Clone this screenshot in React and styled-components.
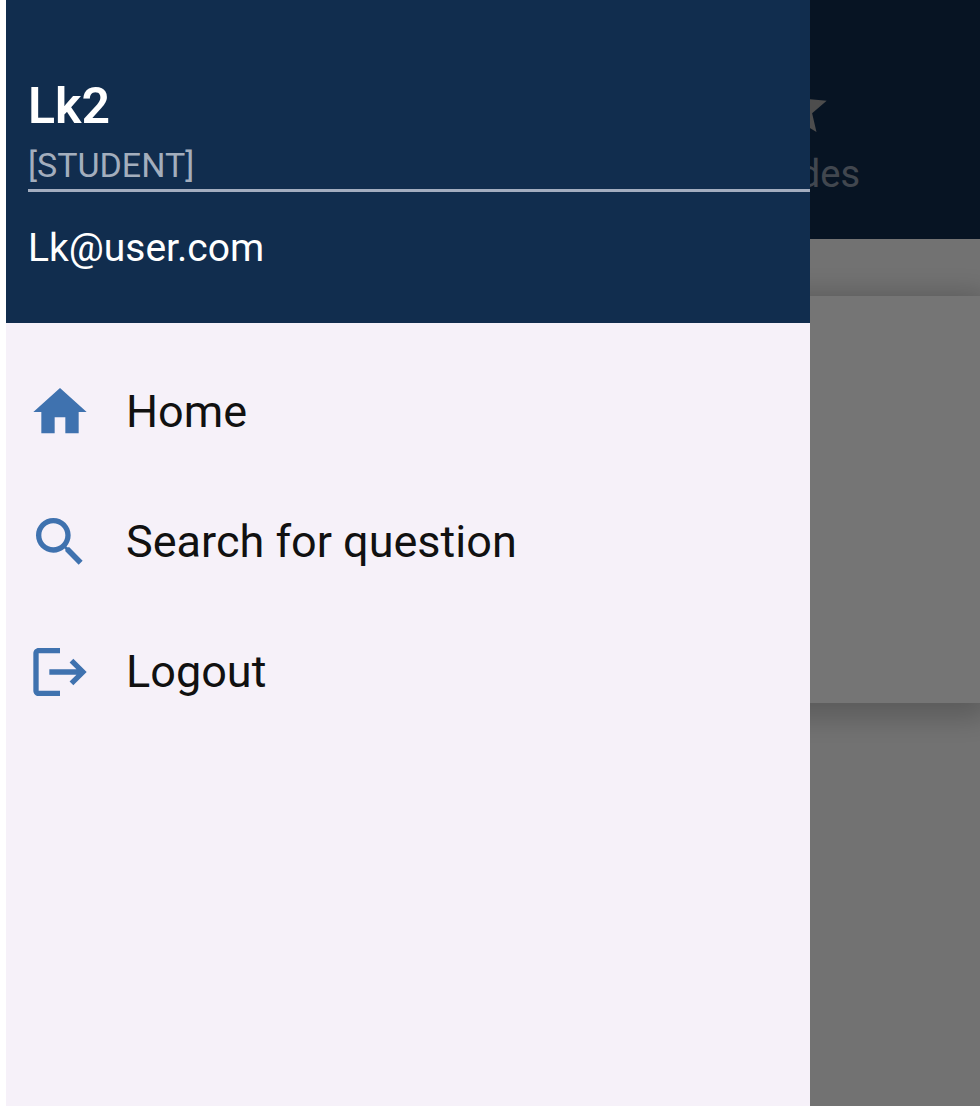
import React from "react";
import styled, { createGlobalStyle } from "styled-components";

const GlobalStyle = createGlobalStyle`
  * { box-sizing: border-box; }
  body { margin: 0; background: #ffffff; font-family: Roboto, sans-serif; }
`;

const Screen = styled.div`
  position: relative;
  min-height: 100vh;
  margin-left: 6px;
  overflow: hidden;
  background: #f9f9f9;
`;

const TopBar = styled.header`
  display: flex;
  justify-content: flex-end;
  height: 239px;
  padding: 76px 120px 0 0;
  background: #112d4e;
`;

const Tab = styled.a`
  display: flex;
  flex-direction: column;
  align-items: center;
  gap: 12px;
  color: rgba(255, 255, 255, 0.54);
  font-size: 38px;
  line-height: 44px;
  text-decoration: none;
`;

const Content = styled.main`
  padding-top: 57px;
  overflow: hidden;
`;

const Card = styled.section`
  height: 407px;
  margin-bottom: 60px;
  background: #ffffff;
  box-shadow: 0 6px 28px 8px rgba(0, 0, 0, 0.22);
`;

const Scrim = styled.div`
  position: absolute;
  inset: 0;
  background: rgba(0, 0, 0, 0.54);
`;

const Drawer = styled.aside`
  position: absolute;
  inset: 0 170px 0 0;
  background: #f6f1f9;
`;

const Profile = styled.div`
  height: 323px;
  padding: 76px 0 0 22px;
  background: #112d4e;
  color: #ffffff;
`;

const Name = styled.h1`
  margin: 0;
  font-size: 50px;
  font-weight: 600;
  line-height: 60px;
`;

const Role = styled.p`
  margin: 0;
  padding-top: 5px;
  border-bottom: 3px solid #a3adbf;
  color: #a3aebd;
  font-size: 34px;
  line-height: 48px;
`;

const Email = styled.p`
  margin: 32px 0 0;
  font-size: 39px;
  line-height: 48px;
`;

const Menu = styled.nav`
  display: flex;
  flex-direction: column;
  padding-top: 24px;
`;

const MenuItem = styled.a`
  display: flex;
  align-items: center;
  gap: 34px;
  width: 100%;
  height: 130px;
  padding: 0 22px;
  border: 0;
  background: none;
  color: #111111;
  font-family: inherit;
  font-size: 45px;
  line-height: 52px;
  text-align: left;
  text-decoration: none;
  cursor: pointer;
`;

const IconSvg = styled.svg`
  flex: none;
  width: 64px;
  height: 64px;
  fill: ${(p) => p.$color};
`;

function Icon({ path, color = "#3f72af" }) {
  return (
    <IconSvg viewBox="0 0 24 24" $color={color} aria-hidden="true">
      <path d={path} />
    </IconSvg>
  );
}

const paths = {
  star: "M12 17.27 18.18 21l-1.64-7.03L22 9.24l-7.19-.61L12 2 9.19 8.63 2 9.24l5.46 4.73L5.82 21z",
  home: "M10 20v-6h4v6h5v-8h3L12 3 2 12h3v8z",
  search:
    "M15.5 14h-.79l-.28-.27C15.41 12.59 16 11.11 16 9.5 16 5.91 13.09 3 9.5 3S3 5.91 3 9.5 5.91 16 9.5 16c1.61 0 3.09-.59 4.23-1.57l.27.28v.79l5 4.99L20.49 19l-4.99-5zm-6 0C7.01 14 5 11.99 5 9.5S7.01 5 9.5 5 14 7.01 14 9.5 11.99 14 9.5 14z",
  logout:
    "M17 7l-1.41 1.41L18.17 11H8v2h10.17l-2.58 2.58L17 17l5-5zM4 5h8V3H4c-1.1 0-2 .9-2 2v14c0 1.1.9 2 2 2h8v-2H4V5z",
};

export default function App() {
  return (
    <>
      <GlobalStyle />
      <Screen>
        <TopBar>
          <Tab href="#grades">
            <Icon path={paths.star} color="#a8a8a8" />
            Grades
          </Tab>
        </TopBar>
        <Content>
          <Card />
        </Content>
        <Scrim />
        <Drawer>
          <Profile>
            <Name>Lk2</Name>
            <Role>[STUDENT]</Role>
            <Email>Lk@user.com</Email>
          </Profile>
          <Menu>
            <MenuItem href="#home">
              <Icon path={paths.home} />
              Home
            </MenuItem>
            <MenuItem href="#search">
              <Icon path={paths.search} />
              Search for question
            </MenuItem>
            <MenuItem as="button" type="button">
              <Icon path={paths.logout} />
              Logout
            </MenuItem>
          </Menu>
        </Drawer>
      </Screen>
    </>
  );
}
